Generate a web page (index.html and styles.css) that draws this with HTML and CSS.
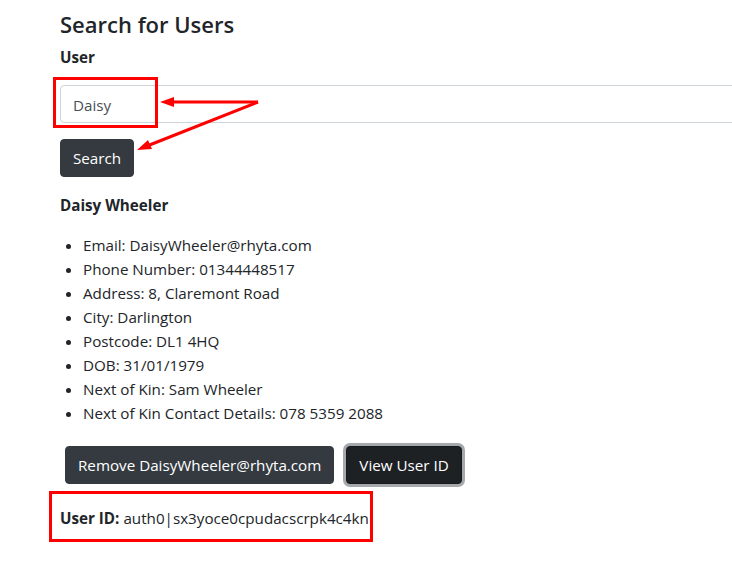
FILE: index.html
```html
<!DOCTYPE html>
<html>
<head>
<meta charset="utf-8">
<link rel="stylesheet" href="styles.css">
</head>
<body>
<div class="page">
  <h3 class="title">Search for Users</h3>
  <label class="label">User</label>
  <div class="input">Daisy</div>
  <button class="btn btn-search">Search</button>
  <p class="name">Daisy Wheeler</p>
  <ul class="details">
    <li>Email: DaisyWheeler@rhyta.com</li>
    <li>Phone Number: 01344448517</li>
    <li>Address: 8, Claremont Road</li>
    <li>City: Darlington</li>
    <li>Postcode: DL1 4HQ</li>
    <li>DOB: 31/01/1979</li>
    <li>Next of Kin: Sam Wheeler</li>
    <li>Next of Kin Contact Details: 078 5359 2088</li>
  </ul>
  <div class="actions">
    <button class="btn btn-remove">Remove DaisyWheeler@rhyta.com</button>
    <button class="btn btn-view">View User ID</button>
  </div>
  <p class="userid"><b>User ID:</b> auth0|sx3yoce0cpudacscrpk4c4kn</p>

  <div class="mark mark-input"></div>
  <div class="mark mark-id"></div>
  <svg class="arrows" width="732" height="566" viewBox="0 0 732 566">
    <g stroke="#ff0000" stroke-width="3" fill="none">
      <line x1="258" y1="102" x2="170" y2="102"/>
      <line x1="258" y1="102" x2="147" y2="146"/>
    </g>
    <g fill="#ff0000">
      <polygon points="160,102 174,97 174,107"/>
      <polygon points="137,150 148,140 152,149"/>
    </g>
  </svg>
</div>
</body>
</html>
```
FILE: styles.css
```css
html, body {
  margin: 0;
  padding: 0;
  background: #fff;
}
body {
  font-family: "Open Sans", "Noto Sans", sans-serif;
  color: #212529;
  font-size: 15.2px;
  line-height: 24px;
}
.page {
  position: relative;
  width: 732px;
  height: 566px;
  overflow: hidden;
  padding-left: 60px;
  box-sizing: border-box;
}
.title {
  margin: 10px 0 6px;
  font-size: 22px;
  font-weight: 600;
  line-height: 29px;
}
.label {
  display: block;
  font-weight: 700;
  margin-bottom: 16px;
}
.input {
  width: 700px;
  height: 38px;
  box-sizing: border-box;
  border: 1px solid #ced4da;
  border-radius: 4px;
  padding: 7px 12px 5px;
  color: #495057;
  margin-bottom: 16px;
}
.btn {
  display: block;
  font-family: inherit;
  font-size: 15.2px;
  line-height: 24px;
  color: #fff;
  background: #343a40;
  border: 1px solid #343a40;
  border-radius: 4px;
  padding: 6px 12px;
  height: 38px;
}
.btn-search {
  margin-bottom: 16px;
}
.name {
  margin: 0 0 16px;
  font-weight: 700;
}
.details {
  margin: 0;
  padding-left: 23px;
}
.actions {
  display: flex;
  gap: 12px;
  margin: 21px 0 0 5px;
}
.btn-view {
  background: #1d2124;
  border-color: #171a1d;
  box-shadow: 0 0 0 3px #a6a9ac;
}
.userid {
  margin: 22px 0 0;
}
.mark {
  position: absolute;
  border: 3px solid #ff0000;
  box-sizing: border-box;
}
.mark-input {
  left: 53px;
  top: 77px;
  width: 105px;
  height: 51px;
}
.mark-id {
  left: 49px;
  top: 491px;
  width: 324px;
  height: 51px;
}
.arrows {
  position: absolute;
  left: 0;
  top: 0;
  pointer-events: none;
}
```
